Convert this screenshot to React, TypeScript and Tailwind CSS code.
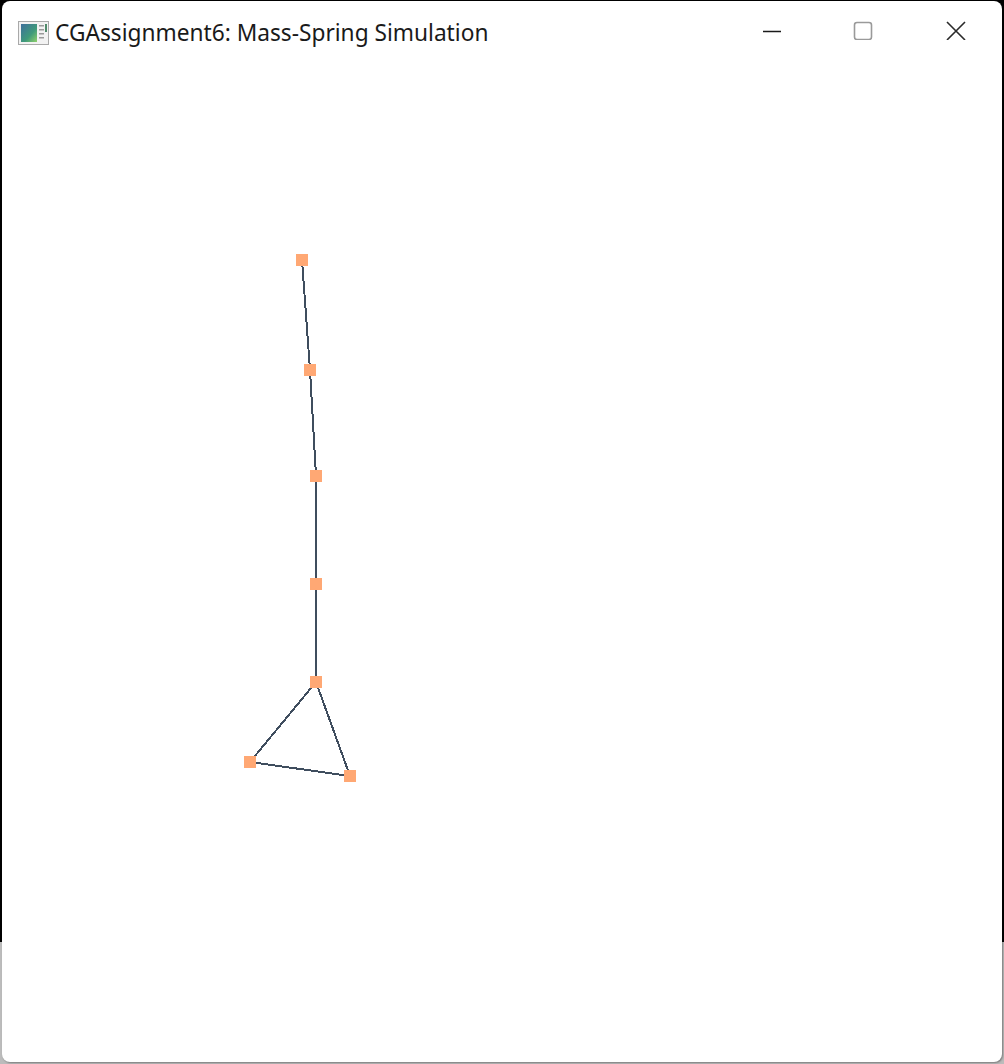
const nodes: [number, number][] = [
  [302, 260],
  [310, 370],
  [316, 476],
  [316, 584],
  [316, 682],
  [250, 762],
  [350, 776],
]

const springs: [number, number][] = [
  [0, 1],
  [1, 2],
  [2, 3],
  [3, 4],
  [4, 5],
  [4, 6],
  [5, 6],
]

function AppIcon() {
  return (
    <svg width="31" height="24" viewBox="0 0 31 24">
      <defs>
        <linearGradient id="g" x1="0" y1="0" x2="1" y2="1">
          <stop offset="0" stopColor="#3d6f9c" />
          <stop offset="0.6" stopColor="#3f9a7a" />
          <stop offset="1" stopColor="#8fd06a" />
        </linearGradient>
      </defs>
      <rect x="0.5" y="0.5" width="30" height="23" fill="#f2f2f2" stroke="#a9a9a9" />
      <rect x="3" y="3" width="16" height="18" fill="url(#g)" />
      <rect x="21" y="4" width="5" height="1.5" fill="#9a9a9a" />
      <rect x="21" y="8" width="5" height="1.5" fill="#9a9a9a" />
      <rect x="21" y="12" width="5" height="1.5" fill="#9a9a9a" />
      <rect x="21" y="16" width="5" height="1.5" fill="#9a9a9a" />
      <rect x="27" y="3" width="2" height="8" fill="#4f8a6a" />
    </svg>
  )
}

export default function App() {
  return (
    <div className="w-[1004px] h-[1064px] flex flex-col bg-[linear-gradient(to_bottom,#000_942px,#bcbcbc_942px)] pl-[2px] pr-[2px] pt-[1px] pb-[2px]">
      <div className="flex-1 flex flex-col bg-white rounded-[8px] shadow-[1px_1px_2px_rgba(0,0,0,0.35)] overflow-hidden">
        {/* Title bar */}
        <div className="h-[62px] flex items-start">
          <div className="flex items-center pt-[20px] pl-[16px] gap-[6px]">
            <AppIcon />
            <span className="text-[22.7px] leading-[24px] text-[#1a1a1a] font-['Segoe_UI','Noto_Sans',sans-serif]">
              CGAssignment6: Mass-Spring Simulation
            </span>
          </div>
          <div className="ml-auto flex pt-[19px] pr-[36px]">
            <svg width="20" height="20" viewBox="0 0 20 20" className="mr-[71px]">
              <path d="M1 11.5h18" stroke="#1a1a1a" strokeWidth="1.6" />
            </svg>
            <svg width="20" height="20" viewBox="0 0 20 20" className="mr-[73px]">
              <rect x="1.5" y="2.5" width="17" height="17" rx="2.5" fill="none" stroke="#9a9a9a" strokeWidth="1.6" />
            </svg>
            <svg width="20" height="20" viewBox="0 0 20 20">
              <path d="M1 2l18 18M19 2L1 20" stroke="#2a2a2a" strokeWidth="1.6" />
            </svg>
          </div>
        </div>
        {/* Canvas */}
        <div className="flex-1">
          <svg width="1000" height="999" viewBox="2 63 1000 999" shapeRendering="crispEdges">
            {springs.map(([a, b], i) => (
              <line
                key={i}
                x1={nodes[a][0]}
                y1={nodes[a][1]}
                x2={nodes[b][0]}
                y2={nodes[b][1]}
                stroke="#3f4d5e"
                strokeWidth="2"
              />
            ))}
            {nodes.map(([x, y], i) => (
              <rect key={i} x={x - 6} y={y - 6} width="12" height="12" fill="#ffa874" />
            ))}
          </svg>
        </div>
      </div>
    </div>
  )
}
